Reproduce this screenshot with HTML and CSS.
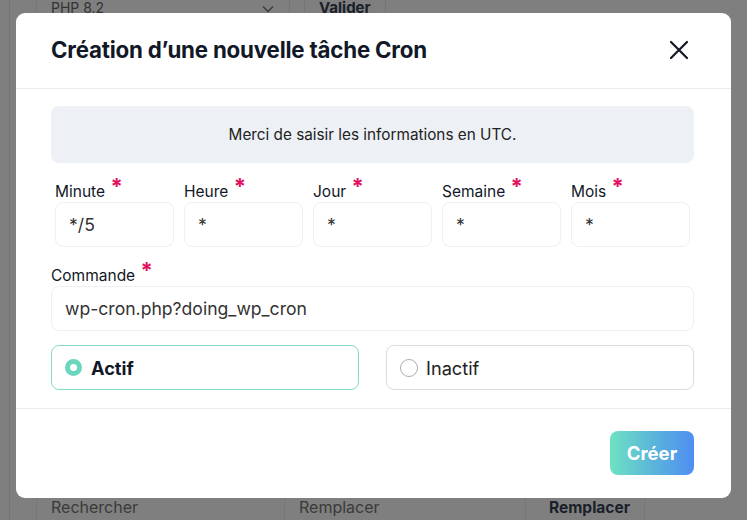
FILE: index.html
```html
<!DOCTYPE html>
<html lang="fr">
<head>
<meta charset="utf-8">
<title>Cron</title>
<link rel="stylesheet" href="styles.css">
</head>
<body>
<div class="page">
  <div class="bg-row bg-top">
    <div class="bg-select"><span>PHP 8.2</span><svg class="chev" width="12" height="8" viewBox="0 0 12 8"><path d="M1 1.5l5 5 5-5" fill="none" stroke="#3a3a3a" stroke-width="1.4"/></svg></div>
    <div class="bg-btn">Valider</div>
  </div>
  <div class="bg-spacer"></div>
  <div class="bg-row bg-bottom">
    <div class="bg-input">Rechercher</div>
    <div class="bg-input bg-input2">Remplacer</div>
    <div class="bg-btn bg-btn2">Remplacer</div>
  </div>
</div>

<div class="modal">
  <div class="modal-header">
    <h1 class="title">Création d’une nouvelle tâche Cron</h1>
    <svg class="close" width="20" height="20" viewBox="0 0 20 20"><path d="M2 2L18 18M18 2L2 18" stroke="#111827" stroke-width="2.2" stroke-linecap="round"/></svg>
  </div>
  <div class="modal-body">
    <div class="info">Merci de saisir les informations en UTC.</div>
    <div class="cron-grid">
      <div class="field"><label class="lbl">Minute <span class="req">*</span></label><div class="input">*/5</div></div>
      <div class="field"><label class="lbl">Heure <span class="req">*</span></label><div class="input">*</div></div>
      <div class="field"><label class="lbl">Jour <span class="req">*</span></label><div class="input">*</div></div>
      <div class="field"><label class="lbl">Semaine <span class="req">*</span></label><div class="input">*</div></div>
      <div class="field"><label class="lbl">Mois <span class="req">*</span></label><div class="input">*</div></div>
    </div>
    <div class="field cmd">
      <label class="lbl">Commande <span class="req">*</span></label>
      <div class="input input-wide">wp-cron.php?doing_wp_cron</div>
    </div>
    <div class="radios">
      <div class="radio radio-on"><span class="dot dot-on"></span><span class="rtext bold">Actif</span></div>
      <div class="radio"><span class="dot"></span><span class="rtext">Inactif</span></div>
    </div>
  </div>
  <div class="modal-footer">
    <button class="btn">Créer</button>
  </div>
</div>
</body>
</html>
```

FILE: styles.css
```css
* { box-sizing: border-box; }
html, body { margin: 0; padding: 0; }
body {
  width: 747px;
  height: 520px;
  overflow: hidden;
  background: #7f7f7f;
  font-family: Inter, "Noto Sans", sans-serif;
  color: #222;
}
.page {
  display: flex;
  flex-direction: column;
  height: 520px;
  padding-left: 26px;
  border-left: 1px solid #767676;
  margin-left: 9px;
}
.bg-row { display: flex; }
.bg-top { height: 26px; margin-top: -6px; }
.bg-spacer { flex: 1; }
.bg-bottom { height: 34px; margin-bottom: -4px; }
.bg-select {
  width: 254px;
  display: flex;
  justify-content: space-between;
  align-items: center;
  padding: 0 15px 0 14px;
  font-size: 14px;
  color: #333;
  border-left: 1px solid #767676;
  border-right: 1px solid #767676;
}
.chev { margin-top: 4px; }
.bg-btn {
  padding: 0 14px;
  display: flex;
  align-items: center;
  font-weight: 700;
  font-size: 15px;
  color: #1a1f2a;
  border-right: 1px solid #767676;
  margin-left: 14px;
  border-left: 1px solid #767676;
}
.bg-input {
  width: 249px;
  display: flex;
  align-items: center;
  padding: 0 14px;
  font-size: 16px;
  color: #3a3a3a;
  border-left: 1px solid #767676;
  border-right: 1px solid #767676;
}
.bg-input2 { width: 241px; border-left: none; }
.bg-btn2 { margin-left: 0; border-left: none; padding: 0 14px 0 23px; font-size: 15.5px; }

.modal {
  position: fixed;
  left: 16px;
  top: 13px;
  width: 715px;
  height: 485px;
  background: #fff;
  border-radius: 9px;
  display: flex;
  flex-direction: column;
}
.modal-header {
  height: 76px;
  border-bottom: 1px solid #e8eaee;
  display: flex;
  align-items: center;
  justify-content: space-between;
  padding: 0 42px 0 35px;
}
.title {
  margin: 0;
  font-size: 22.3px;
  font-weight: 700;
  color: #111827;
  letter-spacing: -0.2px;
  position: relative;
  top: -1px;
}
.close { position: relative; top: -1px; }
.modal-body {
  padding: 17px 37px 18px 35px;
  border-bottom: 1px solid #e8eaee;
}
.info {
  height: 57px;
  background: #edf1f5;
  border-radius: 8px;
  display: flex;
  align-items: center;
  justify-content: center;
  font-size: 15.3px;
  color: #222;
}
.cron-grid {
  display: grid;
  grid-template-columns: repeat(5, 119px);
  column-gap: 10px;
  margin: 14px 4px 0;
}
.field { display: flex; flex-direction: column; }
.lbl {
  font-size: 15.5px;
  height: 25px;
  line-height: 24px;
  color: #111827;
}
.req {
  color: #e0115f;
  font-weight: 700;
  font-size: 22px;
  position: relative;
  top: -3px;
  margin-left: 1px;
}
.input {
  height: 45px;
  border: 1px solid #eef0f4;
  border-radius: 8px;
  padding: 0 13px;
  display: flex;
  align-items: center;
  font-size: 17.6px;
  color: #333;
}
.cmd { margin-top: 14px; }
.radios {
  display: grid;
  grid-template-columns: 308px 308px;
  justify-content: space-between;
  margin-top: 14px;
}
.radio {
  height: 45px;
  border: 1px solid #d9dce1;
  border-radius: 8px;
  display: flex;
  align-items: center;
  padding-left: 13px;
  font-size: 18.2px;
  color: #222;
}
.radio-on { border-color: #84dcc8; }
.dot {
  width: 18px;
  height: 18px;
  border-radius: 50%;
  border: 1.5px solid #a9acb3;
  margin-right: 8px;
}
.dot-on {
  width: 17px;
  height: 17px;
  border: 5.5px solid #6ad6be;
  background: #fff;
  margin-right: 9px;
}
.rtext { color: #222; }
.bold { font-weight: 700; color: #111827; }
.modal-footer {
  flex: 1;
  display: flex;
  justify-content: flex-end;
  align-items: flex-start;
  padding: 22px 37px 0 0;
}
.btn {
  width: 84px;
  height: 44px;
  border: none;
  border-radius: 8px;
  background: linear-gradient(90deg, #6ee2c2 0%, #5bb6da 50%, #4f8ef2 100%);
  color: #fff;
  font-family: Inter, "Noto Sans", sans-serif;
  font-weight: 700;
  font-size: 18.5px;
}
```
